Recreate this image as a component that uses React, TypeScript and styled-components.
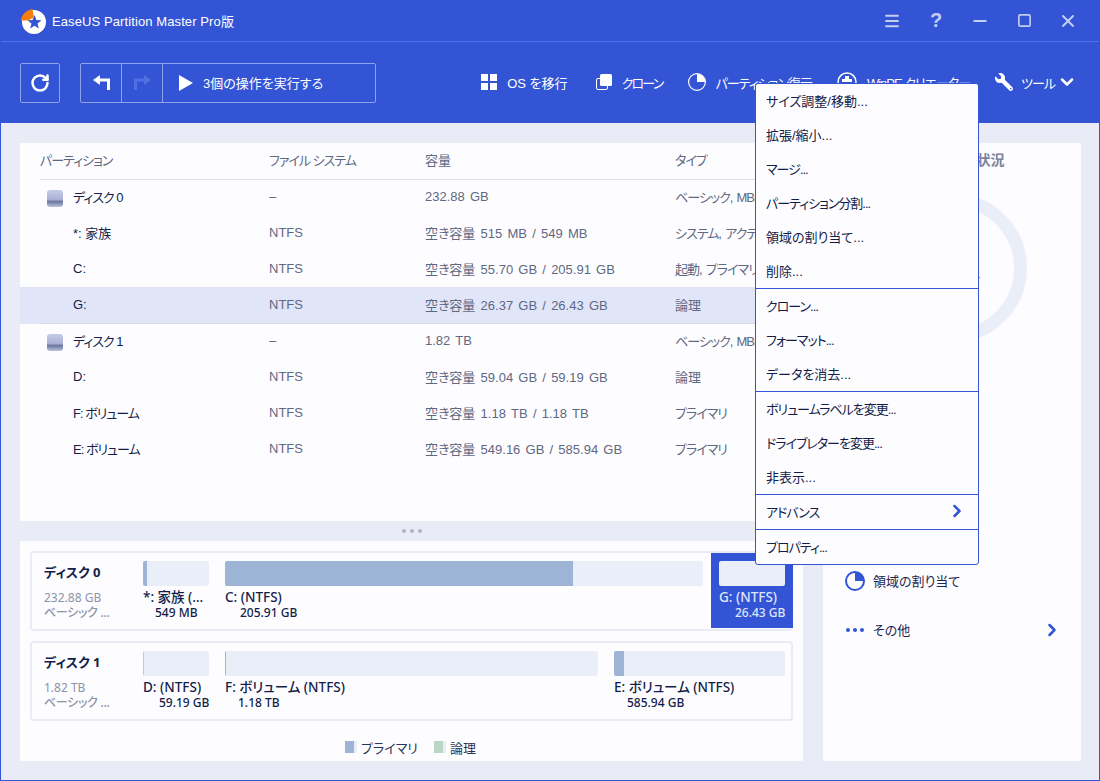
import * as React from 'react';
import styled, { createGlobalStyle } from 'styled-components';
import { ChevronDown, ChevronRight, Menu as MenuIcon, Minus, RotateCw, Square, X } from 'lucide-react';
import { FaWrench } from 'react-icons/fa';

const BLUE = '#3354d4';
const LIGHT_BAR = '#eaeef8';
const PRIMARY = '#9db4d6';
const FONT = '"Liberation Sans", "Noto Sans CJK JP", sans-serif';

// the reference font sets katakana much narrower than Noto does
const isKana = (text: string) => (text.match(/[ァ-ヶー]/g) || []).length / text.length >= 0.5;

const GlobalStyle = createGlobalStyle`
  html, body {
    margin: 0;
    padding: 0;
    background: #e9ecf7;
  }
  * {
    box-sizing: border-box;
  }
`;

const Window = styled.div`
  width: 1100px;
  height: 781px;
  position: relative;
  display: flex;
  flex-direction: column;
  overflow: hidden;
  border: 1px solid ${BLUE};
  border-top: 0;
  background: #e9ecf7;
  font-family: ${FONT};
  font-size: 13px;
  font-feature-settings: "palt";
  color: #141d4a;
`;

const TitleBar = styled.div`
  height: 42px;
  flex: none;
  display: flex;
  align-items: center;
  padding: 0 9px 0 18px;
  background: ${BLUE};
  border-bottom: 1px solid #4d71e6;
`;

const Title = styled.div`
  margin-left: 5px;
  padding-bottom: 1px;
  letter-spacing: 0.1px;
  color: #fff;
`;

const WindowControls = styled.div`
  margin-left: auto;
  display: flex;
`;

const WindowButton = styled.div`
  width: 44px;
  height: 41px;
  display: flex;
  align-items: center;
  justify-content: center;
  color: #c3cef0;
  font-size: 20px;
  font-weight: bold;
`;

const Toolbar = styled.div`
  height: 81px;
  flex: none;
  display: flex;
  align-items: center;
  padding: 0 22px 0 19px;
  background: ${BLUE};
  color: #fff;
`;

const OutlineButton = styled.div`
  width: 40px;
  height: 40px;
  display: flex;
  align-items: center;
  justify-content: center;
  border: 1px solid #8fa3ea;
  border-radius: 2px;
`;

const ActionGroup = styled.div`
  margin-left: 20px;
  width: 296px;
  height: 40px;
  display: flex;
  border: 1px solid #8fa3ea;
  border-radius: 2px;
`;

const GroupButton = styled.div`
  width: 41px;
  display: flex;
  align-items: center;
  justify-content: center;
  border-right: 1px solid #8fa3ea;
`;

const RunButton = styled.div`
  flex: 1;
  display: flex;
  align-items: center;
  gap: 10px;
  padding-left: 16px;
`;

const ToolItems = styled.div`
  margin-left: auto;
  display: flex;
  align-items: center;
  gap: 25px;
`;

const ToolItem = styled.div<{ $gap?: number }>`
  display: flex;
  align-items: center;
  gap: ${(props) => props.$gap ?? 10}px;
  white-space: nowrap;
  padding-bottom: 1px;

  &:first-child {
    margin-right: 3px;
  }
`;

const Kana = styled.span<{ $spacing: number }>`
  letter-spacing: ${(props) => props.$spacing}px;
`;

const FlippedWrench = styled(FaWrench)`
  transform: scaleX(-1);
`;

const ToolsChevron = styled(ChevronDown)`
  margin-left: -6px;
`;

const Content = styled.div`
  flex: 1;
  min-height: 0;
  display: grid;
  grid-template-columns: 783px 258px;
  gap: 20px;
  padding: 20px 19px 19px;
`;

const LeftColumn = styled.div`
  display: flex;
  flex-direction: column;
`;

const TablePanel = styled.div`
  height: 378px;
  flex: none;
  background: #fdfdff;
`;

const HeaderRow = styled.div`
  height: 37px;
  margin-left: 20px;
  display: grid;
  grid-template-columns: 229px 156px 250px 1fr;
  align-items: center;
  padding-bottom: 3px;
  border-bottom: 1px solid #dcdfeb;
  color: #5f6883;
  overflow: hidden;
`;

const Row = styled.div<{ $selected?: boolean }>`
  height: 36px;
  position: relative;
  display: grid;
  grid-template-columns: 229px 156px 250px 1fr;
  align-items: center;
  padding: 0 0 3px 20px;
  white-space: nowrap;
  overflow: hidden;
  background: ${(props) => (props.$selected ? '#e0e5f8' : 'transparent')};
  ${(props) => (props.$selected ? 'box-shadow: 0 -1px 0 #e0e5f8;' : '')}

  ${(props) =>
    props.$selected
      ? `&::after {
    content: '';
    position: absolute;
    left: 20px;
    right: 0;
    bottom: 0;
    height: 1px;
    background: #d6daea;
  }`
      : ''}
`;

const NameCell = styled.div`
  display: flex;
  align-items: center;
  padding-left: 33px;
  white-space: pre;
`;

const DiskName = styled(NameCell)`
  padding-left: 7px;
  gap: 10px;
`;

const DiskGlyph = styled.div`
  width: 16px;
  height: 17px;
  margin-top: 3px;
  border-radius: 3px;
  background: linear-gradient(#c3cbe8 0%, #aab3d8 55%, #6d789f 68%, #7d88ae 76%, #bcc4e0 100%);
`;

const MutedCell = styled.div`
  color: #5f6883;
  word-spacing: 1.6px;
`;

const Splitter = styled.div`
  height: 20px;
  flex: none;
  display: flex;
  align-items: center;
  justify-content: center;
  gap: 4px;
`;

const SplitterDot = styled.div`
  width: 4px;
  height: 4px;
  border-radius: 50%;
  background: #b4b6be;
`;

const DiskPanel = styled.div`
  flex: 1;
  display: flex;
  flex-direction: column;
  gap: 10px;
  padding: 10px 10px 0;
  background: #fdfdff;
`;

const DiskCard = styled.div`
  height: 80px;
  flex: none;
  display: flex;
  padding-left: 12px;
  border: 2px solid #e9ecf5;
  border-radius: 4px;
`;

const DiskInfo = styled.div`
  width: 91px;
  flex: none;
`;

const DiskTitle = styled.div`
  margin-top: 9px;
  height: 20px;
  line-height: 20px;
  font-family: "Noto Sans", "Noto Sans CJK JP", sans-serif;
  font-size: 13px;
  font-weight: 700;
`;

const DiskMeta = styled.div`
  height: 15px;
  line-height: 15px;
  font-family: "Noto Sans", "Noto Sans CJK JP", sans-serif;
  font-size: 12px;
  color: #8d93a8;
`;

const DiskSize = styled(DiskMeta)`
  margin-top: 8px;
`;

const DiskKind = styled(DiskMeta)`
  font-weight: 500;
  letter-spacing: -0.3px;
`;

const Block = styled.div<{ $width: number; $selected?: boolean }>`
  width: ${(props) => props.$width}px;
  height: 75px;
  flex: none;
  padding: 8px 8px 0;
  background: ${(props) => (props.$selected ? BLUE : 'transparent')};
  color: ${(props) => (props.$selected ? '#dfe6fb' : '#141d4a')};
  font-family: "Noto Sans", "Noto Sans CJK JP", sans-serif;
  font-size: 12px;
  font-weight: 500;
`;

const Bar = styled.div`
  height: 25px;
  border-radius: 2px;
  overflow: hidden;
  background: ${LIGHT_BAR};
`;

const BarFill = styled.div<{ $color: string }>`
  height: 100%;
  background: ${(props) => props.$color};
`;

const BlockLabel = styled.div`
  margin-top: 3px;
  height: 16px;
  line-height: 16px;
  font-size: 13.5px;
  white-space: nowrap;
  overflow: hidden;
  text-overflow: ellipsis;
`;

const BlockSize = styled.div<{ $indent: number }>`
  height: 15px;
  line-height: 15px;
  padding-left: ${(props) => props.$indent}px;
  white-space: nowrap;
`;

const Legend = styled.div`
  flex: 1;
  display: flex;
  align-items: center;
  justify-content: center;
  gap: 16px;
  padding: 2px 2px 0 0;
  color: #2a3358;
`;

const LegendItem = styled.div`
  display: flex;
  align-items: center;
  gap: 4px;
`;

const Swatch = styled.div<{ $color: string }>`
  width: 12px;
  height: 12px;
  background: linear-gradient(90deg, ${(props) => props.$color} 0 9px, ${LIGHT_BAR} 9px);
`;

const RightPanel = styled.div`
  display: flex;
  flex-direction: column;
  background: #fdfdff;
  border-radius: 2px;
`;

const PanelTitle = styled.div`
  height: 34px;
  line-height: 34px;
  text-align: center;
  font-size: 14px;
  font-weight: bold;
  color: #7b839c;
`;

const DonutWrap = styled.div`
  position: relative;
  margin: 16px auto 0;
  width: 150px;
  height: 150px;
`;

const DonutText = styled.div`
  position: absolute;
  inset: 0;
  display: flex;
  align-items: center;
  justify-content: center;
  padding-top: 14px;
  font-weight: bold;
`;

const Actions = styled.div`
  margin-top: 17px;
  display: flex;
  flex-direction: column;
`;

const ActionRow = styled.div`
  height: 49px;
  display: flex;
  align-items: center;
  gap: 8px;
  padding: 0 19px 0 22px;
  color: #1d2650;
`;

const ActionIcon = styled.div`
  width: 20px;
  height: 20px;
  flex: none;
  display: flex;
  align-items: center;
  justify-content: center;
`;

const Dots = styled.div`
  display: flex;
  gap: 3px;
`;

const Dot = styled.div`
  width: 4px;
  height: 4px;
  border-radius: 50%;
  background: ${BLUE};
`;

const RowChevron = styled(ChevronRight)`
  margin-left: auto;
  color: ${BLUE};
`;

const ContextMenu = styled.div`
  position: absolute;
  left: 754px;
  top: 83px;
  width: 224px;
  background: #fdfdff;
  border: 1px solid ${BLUE};
  border-radius: 3px;
  color: #141c48;
`;

const MenuRow = styled.div`
  height: 34px;
  display: flex;
  align-items: center;
  justify-content: space-between;
  padding: 0 11px 2px 10px;
`;

const MenuSeparator = styled.div`
  height: 1px;
  background: ${BLUE};
`;

const Logo = () => (
  <svg width="28" height="26" viewBox="0 0 28 26">
    <circle cx="15" cy="14" r="12" fill="#fff" />
    <polygon
      points="15.5,7 17.4,11.9 22.6,12.2 18.5,15.5 19.9,20.6 15.5,17.7 11.1,20.6 12.5,15.5 8.4,12.2 13.6,11.9"
      fill={BLUE}
    />
    <path d="M2 12.5 C2.5 7 6.5 2.5 13.5 1 L15 10 C12.5 10.3 11 11 10 12.5 Z" fill="#f57f0c" />
  </svg>
);

const HookArrow = ({ color, flip }: { color: string; flip?: boolean }) => (
  <svg width="17" height="15" viewBox="0 0 17 15" fill={color}>
    <g transform={flip ? 'matrix(-1 0 0 1 17 0)' : undefined}>
      <polygon points="0,5 7,0 7,10" />
      <path d="M6 5 H15.5 V15" fill="none" stroke={color} strokeWidth="3" />
    </g>
  </svg>
);

const PlayIcon = () => (
  <svg width="14" height="16" viewBox="0 0 14 16">
    <polygon points="0,0 14,8 0,16" fill="#fff" />
  </svg>
);

const WindowsIcon = () => (
  <svg width="16" height="16" viewBox="0 0 16 16" fill="#fff">
    <rect x="0" y="0" width="7" height="7" />
    <rect x="9" y="0" width="7" height="7" />
    <rect x="0" y="9" width="7" height="7" />
    <rect x="9" y="9" width="7" height="7" />
  </svg>
);

const CloneIcon = () => (
  <svg width="16" height="16" viewBox="0 0 16 16">
    <rect x="0.5" y="4.5" width="11" height="11" rx="1.5" fill="none" stroke="#fff" />
    <rect x="4" y="0" width="12" height="12" rx="1.5" fill="#fff" />
  </svg>
);

const PieIcon = ({ color, size, stroke }: { color: string; size: number; stroke: number }) => (
  <svg width={size} height={size} viewBox="0 0 20 20">
    <circle cx="10" cy="10" r={10 - stroke / 2} fill="none" stroke={color} strokeWidth={stroke} />
    <path d="M10 1 A9 9 0 0 1 19 10 L10 10 Z" fill={color} />
  </svg>
);

const WinPEIcon = () => (
  <svg width="20" height="20" viewBox="0 0 20 20">
    <circle cx="10" cy="10" r="9" fill="none" stroke="#fff" strokeWidth="1.5" />
    <path d="M8 4 h4 v3 h3 v3 H5 V7 h3 Z" fill="#fff" />
  </svg>
);

const rows = [
  { name: 'ディスク 0', fs: '–', size: '232.88 GB', kind: 'ベーシック, MBR', disk: true },
  { name: '*: 家族', fs: 'NTFS', size: '空き容量 515 MB / 549 MB', kind: 'システム, アクティブ' },
  { name: 'C:', fs: 'NTFS', size: '空き容量 55.70 GB / 205.91 GB', kind: '起動, プライマリ' },
  { name: 'G:', fs: 'NTFS', size: '空き容量 26.37 GB / 26.43 GB', kind: '論理', selected: true },
  { name: 'ディスク 1', fs: '–', size: '1.82 TB', kind: 'ベーシック, MBR', disk: true },
  { name: 'D:', fs: 'NTFS', size: '空き容量 59.04 GB / 59.19 GB', kind: '論理' },
  { name: 'F: ボリューム', fs: 'NTFS', size: '空き容量 1.18 TB / 1.18 TB', kind: 'プライマリ' },
  { name: 'E: ボリューム', fs: 'NTFS', size: '空き容量 549.16 GB / 585.94 GB', kind: 'プライマリ' },
];

const headers = ['パーティション', 'ファイル システム', '容量', 'タイプ'];

const disks = [
  {
    name: 'ディスク 0',
    size: '232.88 GB',
    parts: [
      { label: '*: 家族 (NTFS)', size: '549 MB', width: 82, indent: 12, used: 4 / 66, color: PRIMARY },
      { label: 'C: (NTFS)', size: '205.91 GB', width: 494, indent: 15, used: 348 / 478, color: PRIMARY },
      { label: 'G: (NTFS)', size: '26.43 GB', width: 82, indent: 16, used: 0, color: PRIMARY, selected: true },
    ],
  },
  {
    name: 'ディスク 1',
    size: '1.82 TB',
    parts: [
      { label: 'D: (NTFS)', size: '59.19 GB', width: 82, indent: 16, used: 1 / 66, color: '#bcd0c6' },
      { label: 'F: ボリューム (NTFS)', size: '1.18 TB', width: 389, indent: 13, used: 1 / 373, color: PRIMARY },
      { label: 'E: ボリューム (NTFS)', size: '585.94 GB', width: 187, indent: 13, used: 10 / 171, color: PRIMARY },
    ],
  },
];

const menuGroups = [
  ['サイズ調整/移動...', '拡張/縮小...', 'マージ...', 'パーティション分割...', '領域の割り当て...', '削除...'],
  ['クローン...', 'フォーマット...', 'データを消去...'],
  ['ボリュームラベルを変更...', 'ドライブレターを変更...', '非表示...'],
  ['アドバンス'],
  ['プロパティ...'],
];

const hiddenActions = ['サイズ調整/移動', '拡張/縮小', 'クローン', 'フォーマット'];

const Text = ({ children, spacing }: { children: string; spacing?: number }) => (
  <Kana $spacing={spacing ?? (isKana(children) ? -1 : 0)}>{children}</Kana>
);

export default function App() {
  return (
    <Window>
      <GlobalStyle />
      <TitleBar>
        <Logo />
        <Title>EaseUS Partition Master Pro版</Title>
        <WindowControls>
          <WindowButton>
            <MenuIcon size={18} strokeWidth={2.4} />
          </WindowButton>
          <WindowButton>?</WindowButton>
          <WindowButton>
            <Minus size={20} strokeWidth={2.2} />
          </WindowButton>
          <WindowButton>
            <Square size={15} strokeWidth={2.6} />
          </WindowButton>
          <WindowButton>
            <X size={20} strokeWidth={2.4} />
          </WindowButton>
        </WindowControls>
      </TitleBar>

      <Toolbar>
        <OutlineButton>
          <RotateCw size={20} strokeWidth={3} />
        </OutlineButton>
        <ActionGroup>
          <GroupButton>
            <HookArrow color="#fff" />
          </GroupButton>
          <GroupButton>
            <HookArrow color="#4f6fe2" flip />
          </GroupButton>
          <RunButton>
            <PlayIcon />
            3個の操作を実行する
          </RunButton>
        </ActionGroup>
        <ToolItems>
          <ToolItem>
            <WindowsIcon />
            OS を移行
          </ToolItem>
          <ToolItem>
            <CloneIcon />
            <Text spacing={-1.75}>クローン</Text>
          </ToolItem>
          <ToolItem>
            <PieIcon color="#fff" size={18} stroke={1.3} />
            <Text>パーティション復元</Text>
          </ToolItem>
          <ToolItem>
            <WinPEIcon />
            <Text>WinPE クリエーター</Text>
          </ToolItem>
          <ToolItem $gap={8}>
            <FlippedWrench size={18} />
            <Text>ツール</Text>
            <ToolsChevron size={20} strokeWidth={3} />
          </ToolItem>
        </ToolItems>
      </Toolbar>

      <Content>
        <LeftColumn>
          <TablePanel>
            <HeaderRow>
              {headers.map((header) => (
                <div key={header}>
                  <Text>{header}</Text>
                </div>
              ))}
            </HeaderRow>
            {rows.map((row) => (
              <Row key={row.name} $selected={row.selected}>
                {row.disk ? (
                  <DiskName>
                    <DiskGlyph />
                    <Text>{row.name}</Text>
                  </DiskName>
                ) : (
                  <NameCell>
                    <Text>{row.name}</Text>
                  </NameCell>
                )}
                <MutedCell>{row.fs}</MutedCell>
                <MutedCell>{row.size}</MutedCell>
                <MutedCell>
                  <Text>{row.kind}</Text>
                </MutedCell>
              </Row>
            ))}
          </TablePanel>
          <Splitter>
            <SplitterDot />
            <SplitterDot />
            <SplitterDot />
          </Splitter>
          <DiskPanel>
            {disks.map((disk) => (
              <DiskCard key={disk.name}>
                <DiskInfo>
                  <DiskTitle>{disk.name}</DiskTitle>
                  <DiskSize>{disk.size}</DiskSize>
                  <DiskKind>ベーシック ...</DiskKind>
                </DiskInfo>
                {disk.parts.map((part) => (
                  <Block key={part.label} $width={part.width} $selected={part.selected}>
                    <Bar>
                      <BarFill $color={part.color} style={{ width: `${part.used * 100}%` }} />
                    </Bar>
                    <BlockLabel>{part.label}</BlockLabel>
                    <BlockSize $indent={part.indent}>{part.size}</BlockSize>
                  </Block>
                ))}
              </DiskCard>
            ))}
            <Legend>
              <LegendItem>
                <Swatch $color={PRIMARY} />
                プライマリ
              </LegendItem>
              <LegendItem>
                <Swatch $color="#bcd6c6" />
                論理
              </LegendItem>
            </Legend>
          </DiskPanel>
        </LeftColumn>

        <RightPanel>
          <PanelTitle>ディスク使用状況</PanelTitle>
          <DonutWrap>
            <svg width="150" height="150" viewBox="0 0 150 150">
              <circle cx="75" cy="75" r="68.5" fill="none" stroke={LIGHT_BAR} strokeWidth="13" />
            </svg>
            <DonutText>26.43 GB</DonutText>
          </DonutWrap>
          <Actions>
            {hiddenActions.map((name) => (
              <ActionRow key={name}>
                <ActionIcon>
                  <PieIcon color={BLUE} size={20} stroke={2} />
                </ActionIcon>
                {name}
              </ActionRow>
            ))}
            <ActionRow>
              <ActionIcon>
                <PieIcon color={BLUE} size={20} stroke={2} />
              </ActionIcon>
              領域の割り当て
            </ActionRow>
            <ActionRow>
              <ActionIcon>
                <Dots>
                  <Dot />
                  <Dot />
                  <Dot />
                </Dots>
              </ActionIcon>
              その他
              <RowChevron size={20} strokeWidth={3} />
            </ActionRow>
          </Actions>
        </RightPanel>
      </Content>

      <ContextMenu>
        {menuGroups.map((group, index) => (
          <React.Fragment key={group[0]}>
            {index > 0 && <MenuSeparator />}
            {group.map((item) => (
              <MenuRow key={item}>
                <Text>{item}</Text>
                {item === 'アドバンス' && <RowChevron size={20} strokeWidth={3} />}
              </MenuRow>
            ))}
          </React.Fragment>
        ))}
      </ContextMenu>
    </Window>
  );
}
